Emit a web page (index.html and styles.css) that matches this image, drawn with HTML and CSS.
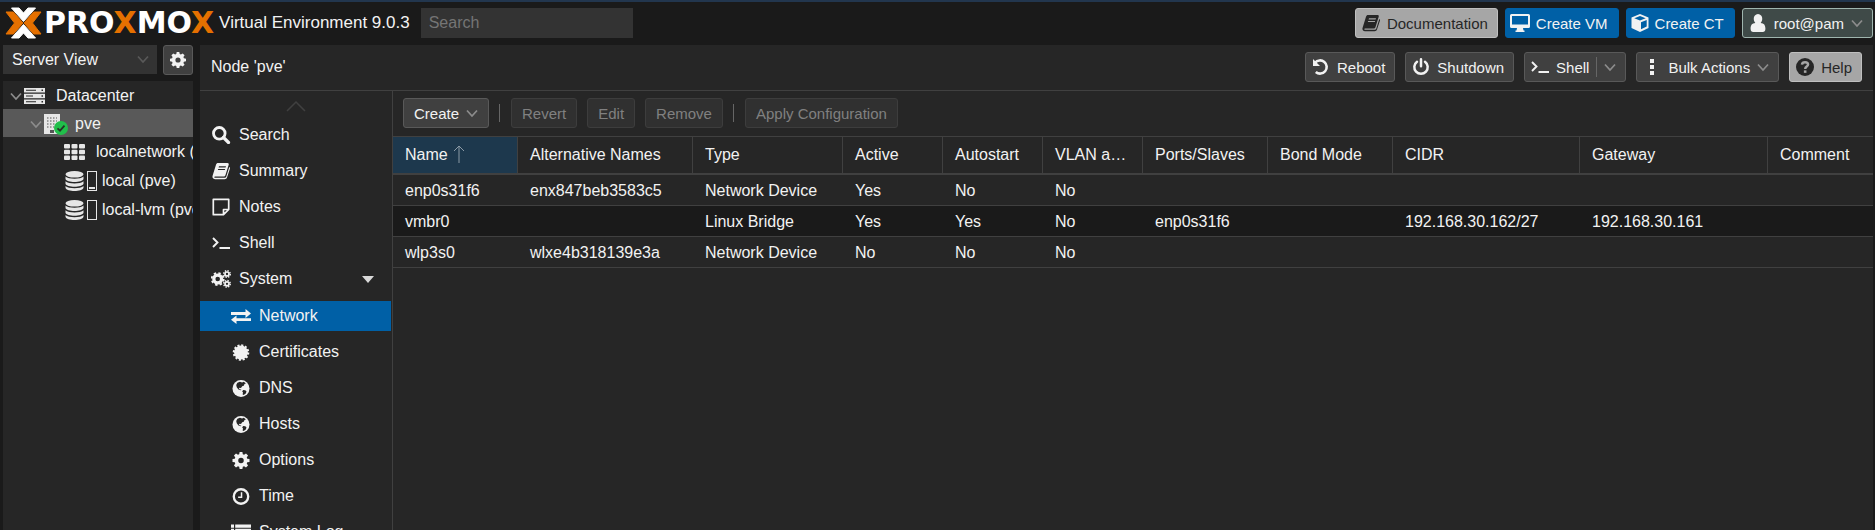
FILE: index.html
```html
<!DOCTYPE html>
<html lang="en">
<head>
  <meta charset="UTF-8" />
  <meta name="viewport" content="width=device-width, initial-scale=1.0"/>
  <title>pve - Proxmox Virtual Environment</title>
  <link rel="stylesheet" href="styles.css">
</head>
<body>

  <!-- Icon set -->
  <svg class="sprite" aria-hidden="true">
    <symbol id="i-chevron" viewBox="0 0 12 12"><path d="M1 3.500L6 9l5-5.500" fill="none" stroke="currentColor" stroke-width="1.700"/></symbol>
    <symbol id="i-up" viewBox="0 0 20 12"><path d="M1 11l9-9 9 9" fill="none" stroke="currentColor" stroke-width="1.500"/></symbol>
    <symbol id="i-gear" viewBox="0 0 16 16"><path fill="currentColor" fill-rule="evenodd" d="M6.700 0h2.600l.4 2.100 1.200.5 1.800-1.200 1.900 1.900-1.200 1.800.5 1.200 2.100.4v2.600l-2.100.4-.5 1.200 1.200 1.800-1.900 1.900-1.800-1.200-1.200.5-.4 2.100H6.700l-.4-2.100-1.200-.5-1.800 1.200-1.900-1.900 1.200-1.800-.5-1.200L0 9.300V6.700l2.100-.4.5-1.200-1.200-1.800 1.900-1.900 1.800 1.200 1.200-.5zM8 5.400a2.600 2.600 0 1 0 0 5.200 2.600 2.600 0 0 0 0-5.200z"/></symbol>
    <symbol id="i-server" viewBox="0 0 21 16"><path fill="currentColor" fill-rule="evenodd" d="M0 0h21v4.500H0zM0 5.700h21v4.500H0zM0 11.500h21V16H0zM2 1.800v1h10v-1zM2 7.500v1h7v-1zM2 13.300v1h10v-1zM17.500 1.500v1.500H19V1.500zM17.500 7.200v1.500H19V7.200zM17.500 13v1.500H19V13z"/></symbol>
    <symbol id="i-building" viewBox="0 0 16 20"><path fill="currentColor" d="M0 0h16v20H0z"/><path stroke="#555" stroke-width="1.200" stroke-dasharray="1.500 1.500" d="M3 4h10M3 7h10M3 10h10M3 13h10"/><path fill="#555" d="M6 16h4v3H6z"/></symbol>
    <symbol id="i-ok" viewBox="0 0 14 14"><circle cx="7" cy="7" r="7" fill="#21bf4b"/><path d="M3.500 7.300l2.500 2.400 4.500-5" fill="none" stroke="#263526" stroke-width="1.800"/></symbol>
    <symbol id="i-grid" viewBox="0 0 21 16"><g fill="currentColor"><rect width="6" height="4.500" rx="1"/><rect x="7.500" width="6" height="4.500" rx="1"/><rect x="15" width="6" height="4.500" rx="1"/><rect y="5.700" width="6" height="4.500" rx="1"/><rect x="7.500" y="5.700" width="6" height="4.500" rx="1"/><rect x="15" y="5.700" width="6" height="4.500" rx="1"/><rect y="11.500" width="6" height="4.500" rx="1"/><rect x="7.500" y="11.500" width="6" height="4.500" rx="1"/><rect x="15" y="11.500" width="6" height="4.500" rx="1"/></g></symbol>
    <symbol id="i-db" viewBox="0 0 18 20"><g fill="currentColor"><ellipse cx="9" cy="3.300" rx="9" ry="3.300"/><path d="M0 5.500c3 3 15 3 18 0V8c-1 4-17 4-18 0zM0 10.300c3 3 15 3 18 0v2.500c-1 4-17 4-18 0zM0 15.100c3 3 15 3 18 0v1.600c-1 4.400-17 4.400-18 0z"/></g></symbol>
    <symbol id="i-search" viewBox="0 0 18 18"><circle cx="7.300" cy="7.300" r="5.800" fill="none" stroke="currentColor" stroke-width="2.800"/><path d="M11.500 11.500l5 5" stroke="currentColor" stroke-width="3.200" stroke-linecap="round"/></symbol>
    <symbol id="i-book" viewBox="0 0 18 18"><path fill="currentColor" fill-rule="evenodd" d="M6 1h9.500c1 0 1.500.8 1.200 1.700L13.500 13c-.3 1-1 1.500-2 1.500H3c-.8 0-1 1-.2 1.200h9.700c.8 0 1.500-.4 1.800-1.300L17.300 5c.8.4.8 1 .6 1.700L15 15.600c-.4 1-1.200 1.600-2.400 1.600H3C1 17.200 0 15.500.6 13.800L4 2.700C4.400 1.600 5 1 6 1zM7 4.200l-.4 1.200h7l.4-1.200zM6.200 6.900l-.4 1.200h7l.4-1.200z"/></symbol>
    <symbol id="i-note" viewBox="0 0 18 18"><path fill="none" stroke="currentColor" stroke-width="1.700" stroke-linejoin="round" d="M1.300 1.300h15.400v10.200l-5.200 5.200H1.300zM11.500 16.700v-5.200h5.200"/></symbol>
    <symbol id="i-term" viewBox="0 0 18 18"><path fill="none" stroke="currentColor" stroke-width="1.900" d="M1 4l4.500 4.500L1 13M7.500 14H18"/></symbol>
    <symbol id="i-exchange" viewBox="0 0 20 16"><path fill="currentColor" d="M0 3.500h14.500V.5L20 5l-5.500 4.500v-3H0zM20 9.800v2.800H5.500v3L0 11.200 5.500 7v2.800z"/></symbol>
    <symbol id="i-cert" viewBox="0 0 16 16"><circle cx="8" cy="8" r="6.500" fill="currentColor"/><circle cx="8" cy="8" r="6.600" fill="none" stroke="currentColor" stroke-width="2.400" stroke-dasharray="1.900 1.556"/></symbol>
    <symbol id="i-globe" viewBox="0 0 16 16"><circle cx="8" cy="8" r="8" fill="currentColor"/><path fill="#262626" d="M4.600 2.600L7 1.600l2 .7 1.700-.6 1.900 1.600-1.300.5-.7 1.500-1.500.6L8 7.600l-1.300-.3-.8.7 1 .7 1.500.4-.6.6-2.200-.8L4 6.800l-.5-2zM10 9.300l2 .4 1.200 1.100-.7 1.800-2 1.600-1-.5.400-1.900-.8-1z"/></symbol>
    <symbol id="i-clock" viewBox="0 0 16 16"><circle cx="8" cy="8" r="6.800" fill="none" stroke="currentColor" stroke-width="2.200"/><path d="M8.500 4v4.700H5.300" fill="none" stroke="currentColor" stroke-width="1.400"/></symbol>
    <symbol id="i-list" viewBox="0 0 20 16"><path fill="currentColor" d="M0 0h3v3.300H0zM4.200 0H20v3.300H4.200zM0 4.300h3v3H0zM4.200 4.300H20v3H4.200zM0 8.500h3v3H0zM4.200 8.500H20v3H4.200zM0 12.700h3V16H0zM4.200 12.700H20V16H4.200z"/></symbol>
    <symbol id="i-monitor" viewBox="0 0 20 18"><path fill="currentColor" fill-rule="evenodd" d="M1.500 0h17A1.500 1.500 0 0 1 20 1.500v11a1.500 1.500 0 0 1-1.500 1.500H13l.5 2.500h1V18h-9v-1.500h1L7 14H1.500A1.500 1.500 0 0 1 0 12.500v-11A1.500 1.500 0 0 1 1.500 0zM2 2v8.500h16V2z"/></symbol>
    <symbol id="i-cube" viewBox="0 0 18 18"><path fill="currentColor" fill-rule="evenodd" d="M9 0l8.500 3.500V14L9 18 .5 14V3.500zM9 2L3.300 4.300 9 6.600l5.700-2.300zM10 8.300v7l5.700-2.700V6z"/></symbol>
    <symbol id="i-user" viewBox="0 0 14 17"><path fill="currentColor" d="M7 0a4.200 4.200 0 0 1 4 4.500c0 1.600-.5 3-1.500 3.900C12.700 8.500 14 10.500 14 14c0 2-1 3-2.500 3h-9C1 17 0 16 0 14c0-3.500 1.300-5.500 4.500-5.600C3.500 7.500 3 6.100 3 4.500A4.200 4.200 0 0 1 7 0z"/></symbol>
    <symbol id="i-undo" viewBox="0 0 18 18"><path fill="none" stroke="currentColor" stroke-width="2.600" d="M3 4.800A6.600 6.600 0 1 1 3.800 14"/><path fill="currentColor" d="M1 1v7h7z"/></symbol>
    <symbol id="i-power" viewBox="0 0 18 18"><path fill="none" stroke="currentColor" stroke-width="2.500" stroke-linecap="round" d="M5 3.700a6.700 6.700 0 1 0 8 0M9 1.300v7"/></symbol>
    <symbol id="i-dots" viewBox="0 0 4 18"><path fill="currentColor" d="M0 1h4v4H0zM0 7h4v4H0zM0 13h4v4H0z"/></symbol>
    <symbol id="i-help" viewBox="0 0 16 16"><circle cx="8" cy="8" r="8" fill="currentColor"/><path fill="none" stroke="#a6a6a6" stroke-width="2.200" d="M5.300 5.800c.3-2.800 5.400-2.800 5.400 0 0 2-2.500 1.700-2.500 4"/><path fill="#a6a6a6" d="M7 11h2.300v2.200H7z"/></symbol>
    <symbol id="i-gears" viewBox="0 0 20 18"><circle cx="6.700" cy="9" r="3.900" fill="none" stroke="currentColor" stroke-width="3.200"/><circle cx="6.700" cy="9" r="6" fill="none" stroke="currentColor" stroke-width="1.800" stroke-dasharray="2.400 2.312"/><circle cx="16" cy="4" r="2" fill="none" stroke="currentColor" stroke-width="1.700"/><circle cx="16" cy="4" r="3.300" fill="none" stroke="currentColor" stroke-width="1.400" stroke-dasharray="1.400 1.192"/><circle cx="16" cy="13.800" r="2" fill="none" stroke="currentColor" stroke-width="1.700"/><circle cx="16" cy="13.800" r="3.300" fill="none" stroke="currentColor" stroke-width="1.400" stroke-dasharray="1.400 1.192"/></symbol>
  </svg>

  <!-- TOP BAR -->
  <header class="topbar">
    <a class="logo" href="#">
      <svg class="logo-mark" viewBox="0 0 37 32" aria-hidden="true">
        <g stroke-width="1" stroke-linejoin="round">
          <path fill="#e57000" stroke="#e57000" d="M1 5h7.500L18 16 8.500 27H1L9.500 16zM36 5h-7.500L19 16l9.500 11H36l-8.500-11z"/>
          <path fill="#fff" stroke="#fff" d="M6.500 1H14l4.500 5L23 1h7.500l-12 13.500zM6.500 31H14l4.500-5 4.500 5h7.500l-12-13.500z"/>
        </g>
      </svg>
      <span class="logo-text">PRO<span class="logo-x">X</span>MO<span class="logo-x">X</span></span>
    </a>
    <span class="version">Virtual Environment 9.0.3</span>
    <input class="search" type="text" placeholder="Search" aria-label="Search">
    <div class="top-actions">
      <button class="btn btn-light"><svg class="ico"><use href="#i-book"/></svg>Documentation</button>
      <button class="btn btn-blue"><svg class="ico ico-wide"><use href="#i-monitor"/></svg>Create VM</button>
      <button class="btn btn-blue"><svg class="ico"><use href="#i-cube"/></svg>Create CT</button>
      <button class="btn btn-user"><svg class="ico"><use href="#i-user"/></svg>root@pam<svg class="chev"><use href="#i-chevron"/></svg></button>
    </div>
  </header>

  <div class="workspace">
    <!-- RESOURCE TREE -->
    <aside class="sidebar">
      <div class="view-bar">
        <div class="view-box">
          <select class="view-select" aria-label="View">
            <option>Server View</option>
          </select>
          <svg class="chev"><use href="#i-chevron"/></svg>
        </div>
        <button class="btn btn-gear" aria-label="Settings"><svg class="ico"><use href="#i-gear"/></svg></button>
      </div>
      <ul class="tree">
        <li class="tree-row"><svg class="chev"><use href="#i-chevron"/></svg><svg class="tree-ico"><use href="#i-server"/></svg><span class="tree-text">Datacenter</span></li>
        <li class="tree-row level-1 selected"><svg class="chev"><use href="#i-chevron"/></svg><span class="node-ico"><svg class="tree-ico"><use href="#i-building"/></svg><svg class="badge"><use href="#i-ok"/></svg></span><span class="tree-text">pve</span></li>
        <li class="tree-row level-2"><svg class="tree-ico"><use href="#i-grid"/></svg><span class="tree-text">localnetwork (pve)</span></li>
        <li class="tree-row level-2 storage"><svg class="tree-ico"><use href="#i-db"/></svg><span class="usage"><span class="usage-fill" style="height: 10%"></span></span><span>local (pve)</span></li>
        <li class="tree-row level-2 storage"><svg class="tree-ico"><use href="#i-db"/></svg><span class="usage"></span><span>local-lvm (pve)</span></li>
      </ul>
    </aside>

    <main class="content">
      <div class="node-bar">
        <h1 class="node-title">Node 'pve'</h1>
        <div class="node-actions">
          <button class="btn"><svg class="ico"><use href="#i-undo"/></svg>Reboot</button>
          <button class="btn"><svg class="ico"><use href="#i-power"/></svg>Shutdown</button>
          <button class="btn"><svg class="ico"><use href="#i-term"/></svg>Shell<span class="split"></span><svg class="chev"><use href="#i-chevron"/></svg></button>
          <button class="btn"><svg class="ico"><use href="#i-dots"/></svg>Bulk Actions<svg class="chev"><use href="#i-chevron"/></svg></button>
          <button class="btn btn-light"><svg class="ico"><use href="#i-help"/></svg>Help</button>
        </div>
      </div>

      <div class="node-body">
        <!-- NODE MENU -->
        <nav class="menu">
          <svg class="menu-up"><use href="#i-up"/></svg>
          <a class="menu-item" href="#"><svg class="ico"><use href="#i-search"/></svg>Search</a>
          <a class="menu-item" href="#"><svg class="ico"><use href="#i-book"/></svg>Summary</a>
          <a class="menu-item" href="#"><svg class="ico"><use href="#i-note"/></svg>Notes</a>
          <a class="menu-item" href="#"><svg class="ico"><use href="#i-term"/></svg>Shell</a>
          <a class="menu-item" href="#"><svg class="ico"><use href="#i-gears"/></svg>System<span class="caret"></span></a>
          <div class="submenu">
            <a class="menu-item active" href="#"><svg class="ico"><use href="#i-exchange"/></svg>Network</a>
            <a class="menu-item" href="#"><svg class="ico"><use href="#i-cert"/></svg>Certificates</a>
            <a class="menu-item" href="#"><svg class="ico"><use href="#i-globe"/></svg>DNS</a>
            <a class="menu-item" href="#"><svg class="ico"><use href="#i-globe"/></svg>Hosts</a>
            <a class="menu-item" href="#"><svg class="ico"><use href="#i-gear"/></svg>Options</a>
            <a class="menu-item" href="#"><svg class="ico"><use href="#i-clock"/></svg>Time</a>
            <a class="menu-item" href="#"><svg class="ico"><use href="#i-list"/></svg>System Log</a>
          </div>
        </nav>

        <!-- NETWORK PANEL -->
        <section class="panel">
          <div class="toolbar">
            <button class="btn">Create<svg class="chev"><use href="#i-chevron"/></svg></button>
            <span class="sep"></span>
            <button class="btn" disabled>Revert</button>
            <button class="btn" disabled>Edit</button>
            <button class="btn" disabled>Remove</button>
            <span class="sep"></span>
            <button class="btn" disabled>Apply Configuration</button>
          </div>
          <table class="grid">
            <colgroup>
              <col class="w-125"><col class="w-175"><col class="w-150"><col class="w-100"><col class="w-100"><col class="w-100"><col class="w-125"><col class="w-125"><col class="w-187"><col class="w-188"><col>
            </colgroup>
            <thead>
              <tr>
                <th class="sorted">Name<svg class="sort" viewBox="0 0 12 18"><path d="M6 18V1M1 6l5-5 5 5" fill="none" stroke="currentColor"/></svg></th>
                <th>Alternative Names</th>
                <th>Type</th>
                <th>Active</th>
                <th>Autostart</th>
                <th>VLAN aware</th>
                <th>Ports/Slaves</th>
                <th>Bond Mode</th>
                <th>CIDR</th>
                <th>Gateway</th>
                <th>Comment</th>
              </tr>
            </thead>
            <tbody>
              <tr><td>enp0s31f6</td><td>enx847beb3583c5</td><td>Network Device</td><td>Yes</td><td>No</td><td>No</td><td></td><td></td><td></td><td></td><td></td></tr>
              <tr><td>vmbr0</td><td></td><td>Linux Bridge</td><td>Yes</td><td>Yes</td><td>No</td><td>enp0s31f6</td><td></td><td>192.168.30.162/27</td><td>192.168.30.161</td><td></td></tr>
              <tr><td>wlp3s0</td><td>wlxe4b318139e3a</td><td>Network Device</td><td>No</td><td>No</td><td>No</td><td></td><td></td><td></td><td></td><td></td></tr>
            </tbody>
          </table>
        </section>
      </div>
    </main>
  </div>

</body>
</html>
```
FILE: styles.css
```css
* {
  box-sizing: border-box;
}

body {
  margin: 0;
  height: 100vh;
  display: flex;
  flex-direction: column;
  overflow: hidden;
  background: #1a1a1a;
  border-top: 2px solid #22364e;
  color: #f2f2f2;
  font-family: "Liberation Sans", Arial, sans-serif;
  font-size: 16px;
  line-height: 20px;
}

.sprite {
  display: none;
}

/* ICONS */
.ico {
  width: 18px;
  height: 18px;
  flex: none;
}

.ico-wide {
  width: 20px;
}

.chev {
  width: 12px;
  height: 12px;
  flex: none;
  color: #8c8c8c;
}

/* BUTTONS */
.btn {
  display: flex;
  align-items: center;
  gap: 7px;
  height: 30px;
  padding: 0 9px 0 6px;
  border: 1px solid #595959;
  border-radius: 3px;
  background: #404040;
  color: #f2f2f2;
  font-family: inherit;
  font-size: 15px;
  white-space: nowrap;
}

.btn:disabled {
  background: #303030;
  border-color: #3d3d3d;
  color: #808080;
}

.btn-light {
  background: #a6a6a6;
  border-color: #bfbfbf;
  color: #262626;
}

.btn-blue {
  gap: 6px;
  padding: 0 10px 0 4px;
  background: #0060a6;
  border-color: #0060a6;
}

.btn-user {
  background: #3f4a48;
  border-color: #9fb5ae;
}

/* TOP BAR */
.topbar {
  display: flex;
  align-items: center;
  height: 43px;
  flex: none;
  padding: 0 2px 1px 5px;
}

.logo {
  display: flex;
  align-items: center;
  color: #fff;
  text-decoration: none;
}

.logo-mark {
  width: 37px;
  height: 32px;
}

.logo-text {
  margin-left: 2px;
  font-family: "DejaVu Sans", sans-serif;
  font-size: 30px;
  font-weight: bold;
}

.logo-x {
  color: #e57000;
}

.version {
  margin-left: 5px;
  font-size: 17px;
}

.search {
  width: 212px;
  height: 30px;
  margin-left: 11px;
  padding: 0 8px;
  border: none;
  background: #333;
  color: #f2f2f2;
  font: inherit;
}

.search::placeholder {
  color: #757575;
}

.top-actions {
  display: flex;
  gap: 7px;
  margin-left: auto;
}

/* SIDEBAR */
.workspace {
  display: flex;
  flex: 1;
  min-height: 0;
}

.sidebar {
  display: flex;
  flex-direction: column;
  width: 193px;
  flex: none;
  padding-left: 3px;
}

.view-bar {
  display: flex;
  gap: 6px;
  height: 36px;
}

.view-box {
  position: relative;
  flex: 1;
  height: 29px;
}

.view-select {
  appearance: none;
  width: 100%;
  height: 100%;
  padding: 0 9px;
  border: none;
  background: #333;
  color: #f2f2f2;
  font: inherit;
}

.view-box .chev {
  position: absolute;
  right: 8px;
  top: 8px;
  color: #595959;
}

.btn-gear {
  width: 30px;
  padding: 0;
  justify-content: center;
}

.btn-gear .ico {
  width: 16px;
}

.tree {
  flex: 1;
  margin: 0;
  padding: 0;
  list-style: none;
  overflow: hidden;
  background: #262626;
}

.tree-row {
  display: flex;
  align-items: center;
  height: 28px;
  padding: 2px 0 0 7px;
  white-space: nowrap;
}

.tree-ico {
  width: 21px;
  height: 20px;
  flex: none;
  margin-left: 2px;
  color: #e6e6e6;
}

.tree-text {
  margin-left: 11px;
}

.level-1 {
  padding-left: 27px;
}

.level-2 {
  padding-left: 59px;
}

.selected {
  background: #595959;
}

.node-ico {
  position: relative;
  display: flex;
}

.node-ico .tree-ico {
  width: 16px;
  margin-right: 4px;
}

.badge {
  position: absolute;
  right: -4px;
  bottom: -1px;
  width: 14px;
  height: 14px;
}

.storage {
  height: 29px;
}

.usage {
  display: flex;
  align-items: flex-end;
  width: 10px;
  height: 20px;
  flex: none;
  margin: 0 5px 0 2px;
  padding: 1px;
  border: 1px solid #e6e6e6;
}

.usage-fill {
  width: 100%;
  background: #e6e6e6;
}

/* NODE HEADER */
.content {
  flex: 1;
  display: flex;
  flex-direction: column;
  min-width: 0;
  margin: 0 2px 0 7px;
  background: #262626;
}

.node-bar {
  display: flex;
  align-items: center;
  height: 46px;
  flex: none;
  padding: 0 11px 1px;
  border-bottom: 1px solid #404040;
}

.node-title {
  margin: 0;
  font-size: 16px;
  font-weight: normal;
}

.node-actions {
  display: flex;
  gap: 10px;
  margin-left: auto;
}

.split {
  width: 1px;
  height: 20px;
  background: #666;
}

.node-body {
  display: flex;
  flex: 1;
  min-height: 0;
}

/* NODE MENU */
.menu {
  display: flex;
  flex-direction: column;
  width: 193px;
  flex: none;
  overflow: hidden;
  border-right: 1px solid #404040;
}

.menu-up {
  width: 20px;
  height: 12px;
  flex: none;
  align-self: center;
  margin: 9px 0 8px;
  color: #404040;
}

.menu-item {
  display: flex;
  align-items: center;
  gap: 8px;
  height: 30px;
  flex: none;
  margin-bottom: 6px;
  padding-left: 11px;
  color: #f2f2f2;
  text-decoration: none;
}

.menu-item .ico {
  width: 20px;
}

.submenu {
  margin: 1px 1px 0 0;
}

.submenu .menu-item {
  padding-left: 31px;
}

.submenu .ico {
  height: 17px;
}

.active {
  background: #0060a6;
}

.caret {
  margin: 0 18px 0 auto;
  border: 6px solid transparent;
  border-top: 7px solid #d9d9d9;
  border-bottom: none;
}

/* NETWORK PANEL */
.panel {
  flex: 1;
  min-width: 0;
}

.toolbar {
  display: flex;
  align-items: center;
  gap: 10px;
  height: 45px;
  padding: 0 10px 1px;
}

.toolbar .btn {
  padding: 0 10px;
}

.sep {
  width: 1px;
  height: 18px;
  margin-right: 1px;
  background: #666;
}

.grid {
  width: 100%;
  table-layout: fixed;
  border-collapse: separate;
  border-spacing: 0;
}

.w-100 { width: 100px; }
.w-125 { width: 125px; }
.w-150 { width: 150px; }
.w-175 { width: 175px; }
.w-187 { width: 187px; }
.w-188 { width: 188px; }

.grid th,
.grid td {
  padding: 0 12px;
  overflow: hidden;
  text-align: left;
  text-overflow: ellipsis;
  white-space: nowrap;
  font-weight: normal;
  border-bottom: 1px solid #404040;
}

.grid th {
  height: 39px;
  border-top: 1px solid #404040;
  border-right: 1px solid #404040;
  border-bottom-width: 2px;
}

.grid th:last-child {
  border-right: none;
}

.grid td {
  height: 31px;
  padding-top: 2px;
}

.grid tbody tr:nth-child(even) {
  background: #1a1a1a;
}

.grid .sorted {
  background: #1d384d;
}

.sort {
  width: 12px;
  height: 18px;
  margin-left: 5px;
  vertical-align: -3px;
  color: #8c9aa6;
}
```
